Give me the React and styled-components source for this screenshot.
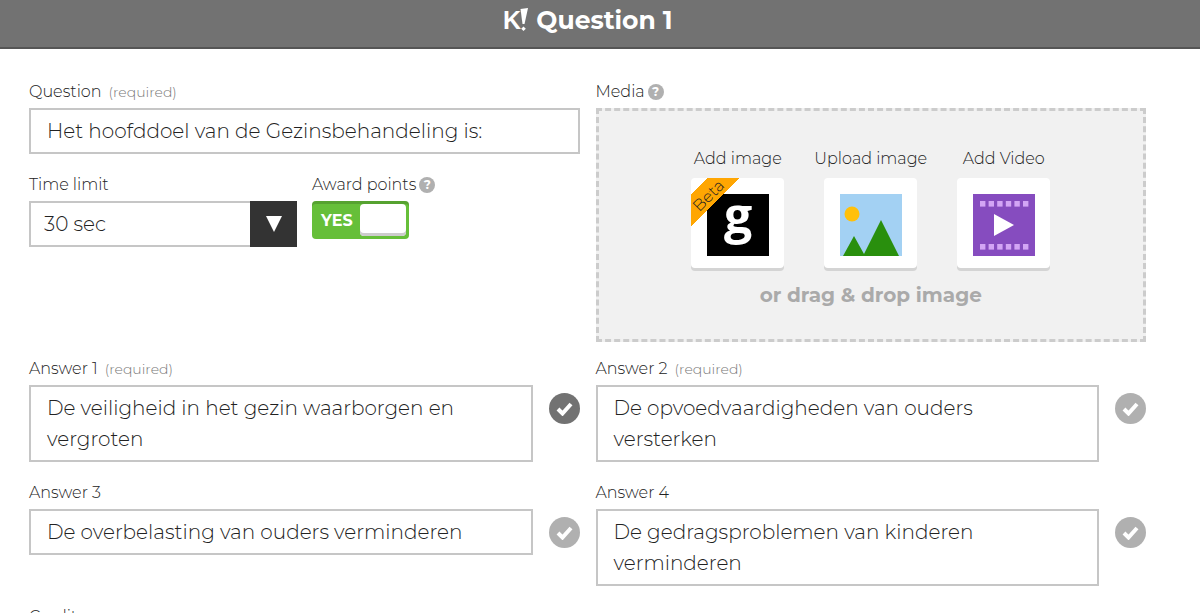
import React, { useState } from "react";
import styled, { createGlobalStyle, ThemeProvider } from "styled-components";

const theme = {
  textColor: "#222",
  mutedColor: "#777",
  borderColor: "#c6c6c6",
  headerColor: "#727272",
  green: "#66bf39",
};

const initAnswers = [
  {
    id: 1,
    text: "De veiligheid in het gezin waarborgen en vergroten",
    required: true,
    correct: true,
    rows: 2,
  },
  {
    id: 2,
    text: "De opvoedvaardigheden van ouders versterken",
    required: true,
    correct: false,
    rows: 2,
  },
  {
    id: 3,
    text: "De overbelasting van ouders verminderen",
    required: false,
    correct: false,
    rows: 1,
  },
  {
    id: 4,
    text: "De gedragsproblemen van kinderen verminderen",
    required: false,
    correct: false,
    rows: 2,
  },
];

export default function App() {
  const [question, setQuestion] = useState(
    "Het hoofddoel van de Gezinsbehandeling is:"
  );
  const [timeLimit, setTimeLimit] = useState("30");
  const [awardPoints, setAwardPoints] = useState(true);
  const [answers, setAnswers] = useState(initAnswers);

  const updateAnswer = (id, change) => {
    setAnswers(answers.map((a) => (a.id === id ? { ...a, ...change } : a)));
  };

  return (
    <ThemeProvider theme={theme}>
      <GlobalStyle />
      <Header>
        <Logo />
        <Title>Question 1</Title>
      </Header>
      <Form>
        <FormGrid>
          <Column>
            <Field>
              <LabelRow>
                <label htmlFor="question">Question</label>
                <Required>(required)</Required>
              </LabelRow>
              <TextInput
                id="question"
                type="text"
                value={question}
                onChange={(e) => setQuestion(e.target.value)}
              />
            </Field>
            <Settings>
              <TimeField>
                <LabelRow>
                  <label htmlFor="time">Time limit</label>
                </LabelRow>
                <SelectWrap>
                  <TimeSelect
                    id="time"
                    value={timeLimit}
                    onChange={(e) => setTimeLimit(e.target.value)}
                  >
                    <option value="20">20 sec</option>
                    <option value="30">30 sec</option>
                    <option value="60">60 sec</option>
                  </TimeSelect>
                  <SelectArrow>
                    <svg width="16" height="16" viewBox="0 0 16 16">
                      <path d="M0 0h16L8 16z" fill="#fff" />
                    </svg>
                  </SelectArrow>
                </SelectWrap>
              </TimeField>
              <Field>
                <LabelRow>
                  <label htmlFor="points">Award points</label>
                  <HelpButton label="About points" />
                </LabelRow>
                <Toggle $on={awardPoints}>
                  <HiddenCheck
                    id="points"
                    type="checkbox"
                    checked={awardPoints}
                    onChange={(e) => setAwardPoints(e.target.checked)}
                  />
                  <ToggleText>{awardPoints ? "YES" : "NO"}</ToggleText>
                  <ToggleKnob />
                </Toggle>
              </Field>
            </Settings>
          </Column>
          <Field>
            <LabelRow>
              <span>Media</span>
              <HelpButton label="About media" />
            </LabelRow>
            <DropZone>
              <MediaOptions>
                <MediaOption>
                  <MediaLabel id="add-image">Add image</MediaLabel>
                  <MediaTile type="button" aria-labelledby="add-image">
                    <LibraryIcon />
                    <BetaCorner>
                      <BetaText>Beta</BetaText>
                    </BetaCorner>
                  </MediaTile>
                </MediaOption>
                <MediaOption>
                  <MediaLabel id="upload-image">Upload image</MediaLabel>
                  <MediaTile type="button" aria-labelledby="upload-image">
                    <PictureIcon />
                  </MediaTile>
                </MediaOption>
                <MediaOption>
                  <MediaLabel id="add-video">Add Video</MediaLabel>
                  <MediaTile type="button" aria-labelledby="add-video">
                    <VideoIcon />
                  </MediaTile>
                </MediaOption>
              </MediaOptions>
              <DropText>or drag &amp; drop image</DropText>
            </DropZone>
          </Field>
        </FormGrid>
        <FormGrid>
          {answers.map((answer) => (
            <Field key={answer.id}>
              <LabelRow>
                <label htmlFor={`answer-${answer.id}`}>
                  Answer {answer.id}
                </label>
                {answer.required && <Required>(required)</Required>}
              </LabelRow>
              <AnswerRow>
                <AnswerInput
                  id={`answer-${answer.id}`}
                  rows={answer.rows}
                  spellCheck="false"
                  value={answer.text}
                  onChange={(e) =>
                    updateAnswer(answer.id, { text: e.target.value })
                  }
                />
                <CorrectMark $on={answer.correct}>
                  <HiddenCheck
                    type="checkbox"
                    aria-label={`Answer ${answer.id} is correct`}
                    checked={answer.correct}
                    onChange={(e) =>
                      updateAnswer(answer.id, { correct: e.target.checked })
                    }
                  />
                  <svg width="17" height="14" viewBox="0 0 17 14">
                    <path
                      d="M2 7l4.5 4.5L15 2"
                      fill="none"
                      stroke="#fff"
                      strokeWidth="4"
                    />
                  </svg>
                </CorrectMark>
              </AnswerRow>
            </Field>
          ))}
          <LabelRow>
            <span>Credit resources</span>
          </LabelRow>
        </FormGrid>
      </Form>
    </ThemeProvider>
  );
}

function HelpButton({ label }) {
  return (
    <Help type="button" aria-label={label}>
      ?
    </Help>
  );
}

function Logo() {
  return (
    <Icon width="25" height="26" viewBox="0 0 25 26" fill="#fff">
      <text
        x="0"
        y="22"
        fontFamily="'Liberation Sans Narrow', 'Liberation Sans', sans-serif"
        fontSize="25"
        fontWeight="bold"
      >
        K
      </text>
      <path d="M17.5 2L25 1l-3.5 16h-2z" />
      <path d="M20.5 19.5l2.3 2.3-2.3 2.3-2.3-2.3z" />
    </Icon>
  );
}

function LibraryIcon() {
  return (
    <Icon width="62" height="62" viewBox="0 0 62 62">
      <path d="M0 0h62v62H0z" />
      <text
        x="31"
        y="39"
        fill="#fff"
        textAnchor="middle"
        fontFamily="'Open Sans', sans-serif"
        fontSize="50"
        fontWeight="700"
      >
        g
      </text>
    </Icon>
  );
}

function PictureIcon() {
  return (
    <Icon width="62" height="62" viewBox="0 0 62 62">
      <path d="M0 0h62v62H0z" fill="#a3d1f3" />
      <circle cx="12" cy="20" r="7.5" fill="#ffc00a" />
      <path d="M3 62l11-20 10 18 17-34 18 36z" fill="#298f0d" />
    </Icon>
  );
}

function VideoIcon() {
  const holes = [7, 15.6, 24.2, 32.8, 41.4, 50];
  return (
    <Icon width="62" height="62" viewBox="0 0 62 62">
      <path d="M0 0h62v62H0z" fill="#864cbf" />
      {holes.map((x) => (
        <g key={x} fill="#d3a5f5">
          <rect x={x} y="7" width="5.4" height="5.6" />
          <rect x={x} y="50" width="5.4" height="5.6" />
        </g>
      ))}
      <path d="M21 20l20 11-20 11z" fill="#fff" />
    </Icon>
  );
}

const GlobalStyle = createGlobalStyle`
  * {
    box-sizing: border-box;
  }

  body {
    margin: 0;
    background-color: #fff;
    color: ${theme.textColor};
    font-family: Montserrat, Inter, sans-serif;
    font-size: 16px;
    font-weight: 300;
  }

  button, input, select, textarea {
    font: inherit;
    color: inherit;
  }
`;

const Icon = styled.svg`
  display: block;
  flex: none;
  overflow: visible;
`;

const Header = styled.header`
  display: flex;
  justify-content: center;
  align-items: center;
  gap: 8px;
  height: 49px;
  padding-bottom: 8px;
  padding-right: 24px;
  color: #fff;
  background-color: ${({ theme }) => theme.headerColor};
  border-bottom: 2px solid #555;
`;

const Title = styled.h1`
  margin: 0;
  font-size: 25px;
  font-weight: 700;
`;

const Form = styled.form`
  display: flex;
  flex-direction: column;
  gap: 14px;
  padding: 30px 54px 0 29px;
`;

const FormGrid = styled.div`
  display: grid;
  grid-template-columns: 1fr 1fr;
  gap: 18px 16px;
`;

const Column = styled.div`
  display: flex;
  flex-direction: column;
  gap: 18px;
`;

const Field = styled.div`
  min-width: 0;
`;

const LabelRow = styled.div`
  display: flex;
  align-items: center;
  gap: 7px;
  height: 25px;
  margin-bottom: 4px;
`;

const Required = styled.span`
  color: ${({ theme }) => theme.mutedColor};
  font-size: 14px;
`;

const TextInput = styled.input`
  width: 100%;
  height: 46px;
  padding: 0 16px;
  font-size: 20px;
  border: 2px solid ${({ theme }) => theme.borderColor};
`;

const Settings = styled.div`
  display: flex;
  gap: 15px;
`;

const TimeField = styled(Field)`
  width: 268px;
`;

const SelectWrap = styled.div`
  display: grid;
  grid-template-columns: 1fr 47px;
`;

const TimeSelect = styled.select`
  grid-area: 1 / 1 / 2 / 3;
  height: 46px;
  padding: 0 60px 0 13px;
  font-size: 20px;
  appearance: none;
  background-color: #fff;
  border: 2px solid ${({ theme }) => theme.borderColor};
  border-radius: 0;
`;

const SelectArrow = styled.span`
  grid-area: 1 / 2;
  display: flex;
  justify-content: center;
  align-items: center;
  background-color: #333;
  pointer-events: none;
`;

const Help = styled.button`
  width: 16px;
  height: 16px;
  padding: 0;
  margin-left: -4px;
  color: #fff;
  font-size: 12px;
  font-weight: 700;
  line-height: 16px;
  background-color: #b0b0b0;
  border: none;
  border-radius: 50%;
`;

const HiddenCheck = styled.input`
  position: absolute;
  opacity: 0;
  margin: 0;
`;

const Toggle = styled.label`
  display: flex;
  flex-direction: ${({ $on }) => ($on ? "row" : "row-reverse")};
  justify-content: space-between;
  align-items: center;
  width: 97px;
  height: 38px;
  padding: 0 3px 0 9px;
  background-color: ${({ theme, $on }) => ($on ? theme.green : "#b0b0b0")};
  border-radius: 4px;
  box-shadow: inset 0 3px 0 rgba(0, 0, 0, 0.15);
  cursor: pointer;
`;

const ToggleText = styled.span`
  color: #fff;
  font-family: Montserrat, "Open Sans", sans-serif;
  font-size: 16px;
  font-weight: 700;
`;

const ToggleKnob = styled.span`
  width: 46px;
  height: 32px;
  background-color: #fff;
  border-radius: 4px;
  box-shadow: inset 0 -3px 0 #ccc;
`;

const DropZone = styled.div`
  display: flex;
  flex-direction: column;
  align-items: center;
  min-height: 234px;
  padding: 36px 0 32px;
  background-color: #f1f1f1;
  border: 3px dashed #ccc;
`;

const MediaOptions = styled.div`
  display: flex;
  gap: 40px;
`;

const MediaOption = styled.div`
  display: flex;
  flex-direction: column;
  align-items: center;
  gap: 7px;
  width: 93px;
`;

const MediaLabel = styled.span`
  line-height: 24px;
  white-space: nowrap;
`;

const MediaTile = styled.button`
  position: relative;
  display: flex;
  justify-content: center;
  width: 93px;
  height: 90px;
  padding: 16px 0 0;
  background-color: #fff;
  border: none;
  border-radius: 4px;
  box-shadow: 0 3px 0 #d4d4d4;
  cursor: pointer;
`;

const BetaCorner = styled.span`
  position: absolute;
  top: 0;
  left: 0;
  display: flex;
  justify-content: center;
  align-items: center;
  width: 49px;
  height: 49px;
  padding: 0 15px 15px 0;
  background: linear-gradient(
    135deg,
    transparent 12px,
    #ffa602 12px,
    #ffa602 34px,
    transparent 34px
  );
`;

const BetaText = styled.span`
  transform: rotate(-45deg);
`;

const DropText = styled.p`
  margin: 15px 0 0;
  color: #aaa;
  font-size: 20px;
  font-weight: 700;
  line-height: 24px;
`;

const AnswerRow = styled.div`
  display: flex;
  align-items: flex-start;
  gap: 16px;
`;

const AnswerInput = styled.textarea`
  flex: 1;
  display: block;
  min-width: 0;
  padding: 6px 46px 5px 16px;
  font-size: 20px;
  line-height: 31px;
  border: 2px solid ${({ theme }) => theme.borderColor};
  resize: none;
  overflow: hidden;
`;

const CorrectMark = styled.label`
  display: flex;
  justify-content: center;
  align-items: center;
  width: 31px;
  height: 31px;
  margin-top: 8px;
  background-color: ${({ $on }) => ($on ? "#727272" : "#b0b0b0")};
  border-radius: 50%;
  cursor: pointer;
`;
